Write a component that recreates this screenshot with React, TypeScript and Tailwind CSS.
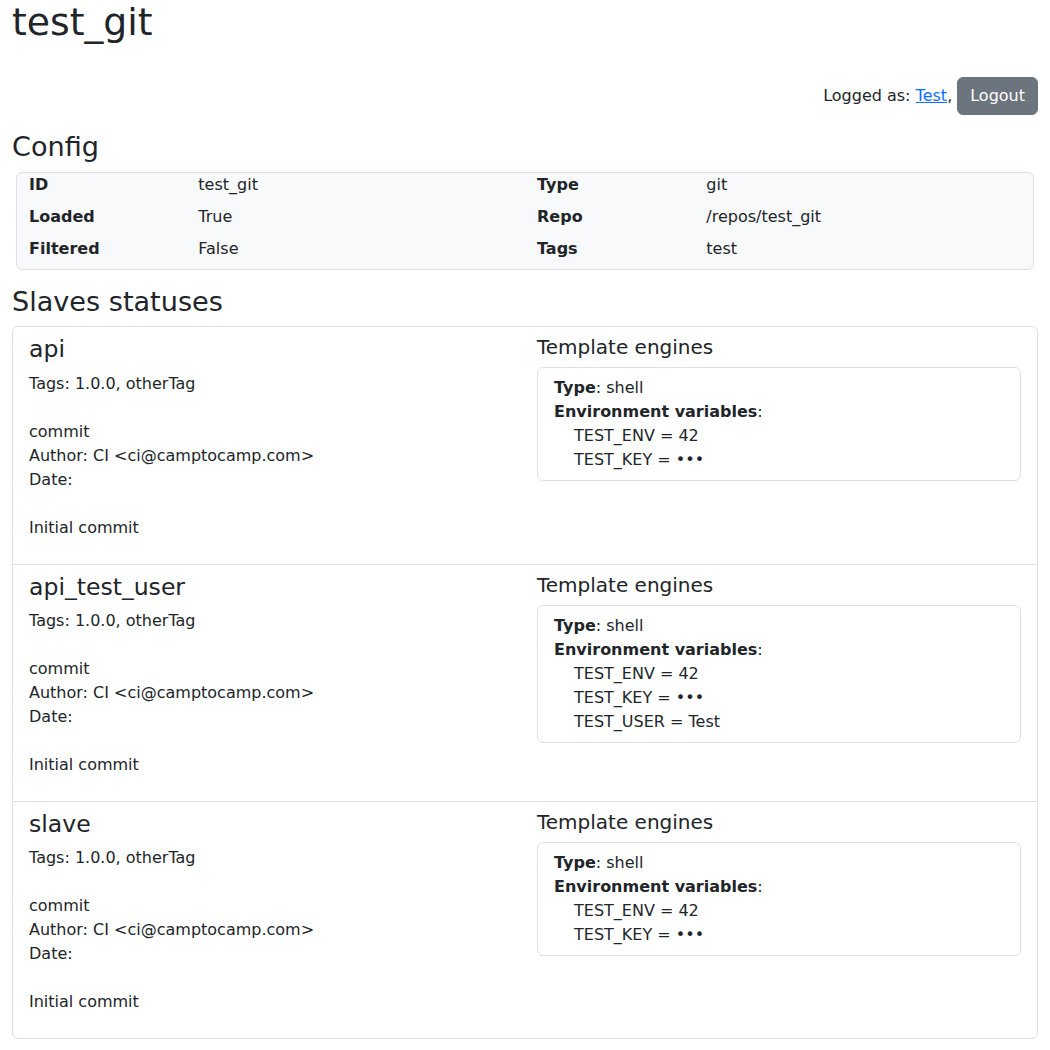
const config = [
  ['ID', 'test_git', 'Type', 'git'],
  ['Loaded', 'True', 'Repo', '/repos/test_git'],
  ['Filtered', 'False', 'Tags', 'test'],
]

const slaves = [
  { name: 'api', env: ['TEST_ENV = 42', 'TEST_KEY = •••'] },
  {
    name: 'api_test_user',
    env: ['TEST_ENV = 42', 'TEST_KEY = •••', 'TEST_USER = Test'],
  },
  { name: 'slave', env: ['TEST_ENV = 42', 'TEST_KEY = •••'] },
]

const App = () => {
  return (
    <div className="px-3 text-base leading-6 text-[#212529] font-['DejaVu_Sans',sans-serif]">
      <h1 className="text-[37.75px] leading-[1.2] font-normal mb-2">
        test_git
      </h1>
      <div className="flex justify-end items-center mt-8">
        <span>
          Logged as:{' '}
          <a href="#" className="text-[#0d6efd] underline">
            Test
          </a>
          ,
        </span>
        <button className="ml-[5px] bg-[#6c757d] text-white border border-[#6c757d] rounded-md px-3 py-1.5 leading-6">
          Logout
        </button>
      </div>

      <h3 className="text-[27.1px] leading-[1.2] font-normal mt-4 mb-2">
        Config
      </h3>
      <div className="mx-1 border border-[#dee2e6] rounded-md bg-[#f8f9fa]">
        {config.map((row) => (
          <div
            key={row[0]}
            className="grid grid-cols-[2fr_4fr_2fr_4fr] h-8 items-start"
          >
            <div className="px-3 font-bold">{row[0]}</div>
            <div className="px-3">{row[1]}</div>
            <div className="px-3 font-bold">{row[2]}</div>
            <div className="px-3">{row[3]}</div>
          </div>
        ))}
      </div>

      <h3 className="text-[27.1px] leading-[1.2] font-normal mt-4 mb-2">
        Slaves statuses
      </h3>
      <div className="border border-[#dfe0e1] rounded-md">
        {slaves.map((slave, i) => {
          return (
            <div
              key={slave.name}
              className={`px-4 py-2 ${i > 0 ? 'border-t border-[#dfe0e1]' : ''}`}
            >
              <div className="grid grid-cols-2 -mx-3">
                <div className="px-3">
                  <h4 className="text-[23.55px] leading-[1.2] font-normal mb-2">
                    {slave.name}
                  </h4>
                  <p className="mb-4">
                    Tags: 1.0.0, otherTag
                    <br />
                    <br />
                    commit
                    <br />
                    Author: CI &lt;ci@camptocamp.com&gt;
                    <br />
                    Date:
                    <br />
                    <br />
                    Initial commit
                  </p>
                </div>
                <div className="px-3">
                  <h5 className="text-xl leading-[1.2] font-normal mb-2">
                    Template engines
                  </h5>
                  <div className="border border-[#dfe0e1] rounded-md px-4 py-2">
                    <div>
                      <b className="font-bold">Type</b>: shell
                    </div>
                    <div>
                      <b className="font-bold">Environment variables</b>:
                    </div>
                    <ul className="pl-5">
                      {slave.env.map((e) => (
                        <li key={e}>{e}</li>
                      ))}
                    </ul>
                  </div>
                </div>
              </div>
            </div>
          )
        })}
      </div>
    </div>
  )
}

export default App
